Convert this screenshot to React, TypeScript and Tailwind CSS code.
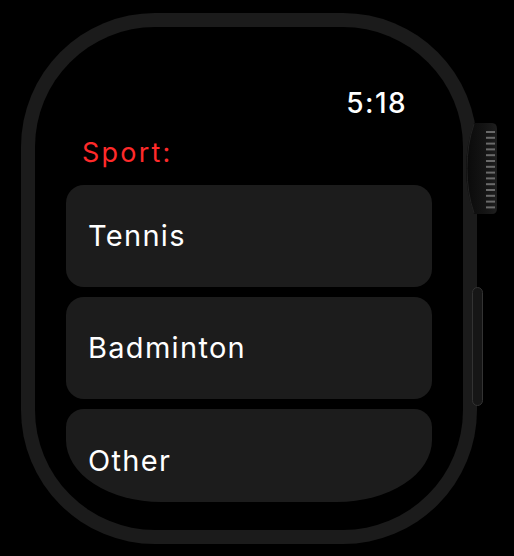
import React from "react";

function Crown() {
  const ribs = [];
  for (let y = 8; y < 86; y += 5.8) {
    ribs.push(<rect key={y} x={20} y={y} width={9} height={2} fill="#6a6a6a" />);
  }
  return (
    <svg width="31" height="91" viewBox="0 0 31 91" className="absolute left-[466px] top-[123px]">
      <defs>
        <linearGradient id="cg" x1="0" x2="1" y1="0" y2="0">
          <stop offset="0" stopColor="#0a0a0a" />
          <stop offset="0.6" stopColor="#141414" />
          <stop offset="1" stopColor="#1e1e1e" />
        </linearGradient>
      </defs>
      <path d="M8 0 H26 Q31 0 31 6 V85 Q31 91 26 91 H8 Q0 70 0 45.5 Q0 21 8 0 Z" fill="url(#cg)" />
      <path d="M8 1 Q1 21 1 45.5 Q1 70 8 90" stroke="#222" strokeWidth="1" fill="none" />
      {ribs}
    </svg>
  );
}

export default function App() {
  const font = { fontFamily: "Inter, 'Noto Sans', sans-serif" };
  return (
    <div className="relative w-[514px] h-[556px] bg-black overflow-hidden" style={font}>
      <div className="pt-[13px] pl-[21px]">
        <div className="w-[456px] h-[531px] rounded-[134px] bg-[#1b1b1b] p-[14px]">
          <div className="w-full h-full rounded-[120px] bg-black overflow-hidden flex flex-col">
            <div className="flex justify-end pr-[56px] pt-[62px] h-[104px]">
              <span className="text-white text-[28px] font-medium leading-none tracking-[1.4px] h-[30px]">5:18</span>
            </div>
            <div className="pl-[47px] text-[#ff2a2a] text-[27px] leading-none tracking-[2.2px] mt-[8px]">Sport:</div>
            <div className="flex flex-col gap-[10px] px-[31px] mt-[19px]">
              <div className="h-[102px] rounded-[18px] bg-[#1c1c1c] flex items-center pl-[22px]">
                <span className="text-white text-[29px] tracking-[1.3px]">Tennis</span>
              </div>
              <div className="h-[102px] rounded-[18px] bg-[#1c1c1c] flex items-center pl-[22px]">
                <span className="text-white text-[29px] tracking-[1.3px]">Badminton</span>
              </div>
              <div className="h-[93px] rounded-[18px_18px_95px_95px/18px_18px_62px_62px] bg-[#1c1c1c] flex items-center pl-[22px] pt-[10px]">
                <span className="text-white text-[29px] tracking-[1.3px]">Other</span>
              </div>
            </div>
          </div>
        </div>
      </div>
      <Crown />
      <div className="absolute left-[472px] top-[287px] w-[11px] h-[119px] rounded-full bg-[#161616] border border-[#333]" />
    </div>
  );
}
